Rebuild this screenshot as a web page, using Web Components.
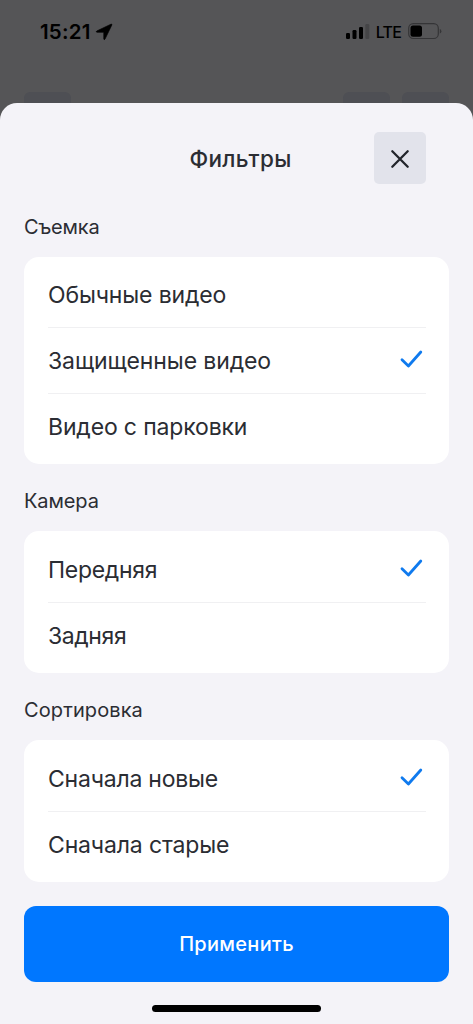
<!DOCTYPE html>
<html lang="ru">
<head>
<meta charset="utf-8">
<title>Фильтры</title>
<style>
html,body{margin:0;height:100%;overflow:hidden}
body{font-family:Inter,"Liberation Sans",sans-serif;color:#2b2d33;background:#555557}
</style>
</head>
<body>
<filter-screen>
  <status-bar slot="status"></status-bar>
  <filter-sheet heading="Фильтры">
    <filter-group label="Съемка" style="--label-spacing:-.2px">
      <filter-option>Обычные видео</filter-option>
      <filter-option checked style="letter-spacing:-.1px">Защищенные видео</filter-option>
      <filter-option>Видео с парковки</filter-option>
    </filter-group>
    <filter-group label="Камера" style="--label-spacing:-.1px">
      <filter-option checked style="letter-spacing:-.28px">Передняя</filter-option>
      <filter-option style="letter-spacing:-.4px">Задняя</filter-option>
    </filter-group>
    <filter-group label="Сортировка" style="--label-spacing:.1px">
      <filter-option checked style="letter-spacing:-.22px">Сначала новые</filter-option>
      <filter-option>Сначала старые</filter-option>
    </filter-group>
    <apply-button slot="action">Применить</apply-button>
  </filter-sheet>
</filter-screen>
<script>
const define = (name, html) => customElements.define(name, class extends HTMLElement {
  connectedCallback() {
    if (this.shadowRoot) return;
    const root = this.attachShadow({mode: 'open'});
    root.innerHTML = html;
    root.querySelectorAll('[data-attr]').forEach(n => n.textContent = this.getAttribute(n.dataset.attr));
  }
});

define('filter-screen', `
<style>
:host{display:flex;flex-direction:column;width:473px;height:1024px;background:#555557}
.back{height:11px;display:flex;gap:12px;padding:0 24px;flex:none}
.back i{width:47px;height:11px;border-radius:6px 6px 0 0;background:#4e4f54}
.back i:first-child{margin-right:auto}
</style>
<slot name="status"></slot>
<div class="back"><i></i><i></i><i></i></div>
<slot></slot>`);

define('status-bar', `
<style>
:host{display:flex;flex:none;height:92px;box-sizing:border-box;padding:21px 31px 0 40px;align-items:flex-start;color:#000}
.time{font-size:20.5px;line-height:22px;font-weight:600;letter-spacing:.2px}
.net{font-size:16px;line-height:22px;font-weight:500;margin:0 7px 0 6px;letter-spacing:-.8px}
svg{display:block}
.loc{margin:2px auto 0 4px}
</style>
<span class="time">15:21</span>
<svg class="loc" width="18" height="18" viewBox="0 0 18 18"><path d="M16 1.2Q17.2.8 16.8 2L10 16.1Q9.2 17.4 8.8 16V9.2H2Q.4 8.8 1.8 8Z" stroke="#000" stroke-width=".7"/></svg>
<svg width="24" height="22" viewBox="0 0 24 22"><rect y="12" width="4" height="6" rx="1.2"/><rect x="6.5" y="9" width="4" height="9" rx="1.2"/><rect x="13" y="6" width="4" height="12" rx="1.2"/><rect x="19.3" y="3" width="4" height="15" rx="1.2" fill="#3d3d3f" opacity=".65"/></svg>
<span class="net">LTE</span>
<svg width="34" height="22" viewBox="0 0 34 22"><rect x=".7" y="2.7" width="29.6" height="14.8" rx="4.6" fill="none" stroke="#353537" stroke-width="1.2"/><rect x="2.5" y="4.5" width="11.5" height="11.2" rx="2.5"/><path d="M31.8 8v4.6q1.6-.5 1.6-2.3T31.8 8z" fill="#353537"/></svg>`);

define('filter-sheet', `
<style>
:host{display:flex;flex-direction:column;flex:1;background:#f4f3f8;border-radius:17px 17px 0 0;padding:29px 24px 0;box-sizing:border-box}
header{display:grid;grid-template-columns:52px 1fr 52px;padding:0 23px 0 31px;height:52px;align-items:center;margin-bottom:30px}
h1{grid-column:2;margin:0;padding-top:1px;text-align:center;font-size:22.5px;line-height:28px;font-weight:500;letter-spacing:.35px}
button{width:52px;height:52px;border:0;padding:1px 0 0;border-radius:5px;background:#e2e3eb;display:grid;place-items:center}
footer{display:flex;justify-content:center;margin-top:23px}
footer i{width:169px;height:7px;border-radius:4px;background:#000}
</style>
<header><h1 data-attr="heading"></h1>
<button aria-label="Закрыть"><svg width="20" height="20" viewBox="0 0 20 20" fill="none" stroke="#22252b" stroke-width="2.3" stroke-linecap="round"><path d="M2.3 2.3l15.4 15.4M17.7 2.3L2.3 17.7"/></svg></button></header>
<slot></slot>
<slot name="action"></slot>
<footer><i></i></footer>`);

define('filter-group', `
<style>
:host{display:block;margin-bottom:24px}
h2{margin:0 0 16px;font-size:20px;line-height:27px;font-weight:400;letter-spacing:var(--label-spacing,0)}
section{background:#fff;border-radius:15px;padding:6px 23px 4px 24px}
:host(:first-of-type) section{padding:5px 23px 4px 24px}
::slotted(filter-option:not(:last-child)){--line:#f0f0f2}
</style>
<h2 data-attr="label"></h2><section><slot></slot></section>`);

define('filter-option', `
<style>
:host{display:flex;height:66px;box-sizing:border-box;align-items:center;justify-content:space-between;border-bottom:1.5px solid var(--line,transparent);font-size:23px;line-height:30px;letter-spacing:-.15px}
svg{display:none;margin:0 3px 3px 0}
:host([checked]) svg{display:block}
</style>
<span><slot></slot></span>
<svg width="24" height="20" viewBox="0 0 24 20" fill="none" stroke="#0f7aee" stroke-width="2.8" stroke-linecap="round" stroke-linejoin="round"><path d="M3 10.8l6.4 6.2L21.8 3"/></svg>`);

define('apply-button', `
<style>
:host{display:flex;height:76px;flex:none;align-items:center;justify-content:center;border-radius:12px;background:#0077ff;color:#fff;font-size:20px;font-weight:500;letter-spacing:.3px}
</style>
<slot></slot>`);
</script>
</body>
</html>
